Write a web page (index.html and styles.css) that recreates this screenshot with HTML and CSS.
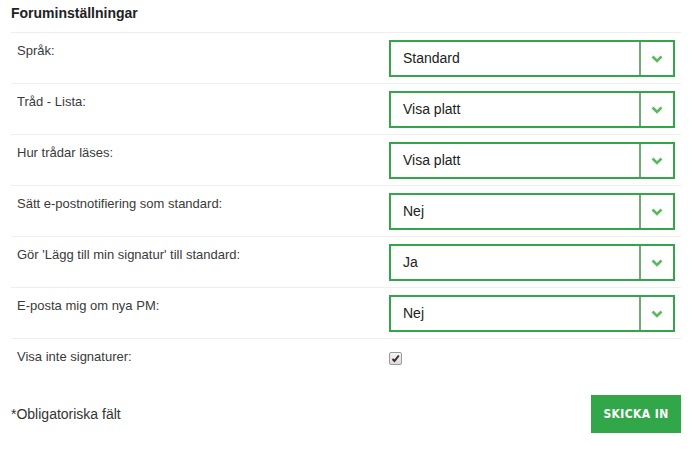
FILE: index.html
```html
<!DOCTYPE html>
<html>
<head>
<meta charset="utf-8">
<link rel="stylesheet" href="styles.css">
</head>
<body>
<div class="panel">
  <h2 class="title">Foruminställningar</h2>
  <div class="rows">
    <div class="row">
      <div class="label">Språk:</div>
      <div class="select"><span class="value">Standard</span><span class="arrow"><svg width="12" height="8" viewBox="0 0 12 8"><path d="M1.5 1.5 L6 6 L10.5 1.5" fill="none" stroke="#5cb85c" stroke-width="2.6"/></svg></span></div>
    </div>
    <div class="row">
      <div class="label">Tråd - Lista:</div>
      <div class="select"><span class="value">Visa platt</span><span class="arrow"><svg width="12" height="8" viewBox="0 0 12 8"><path d="M1.5 1.5 L6 6 L10.5 1.5" fill="none" stroke="#5cb85c" stroke-width="2.6"/></svg></span></div>
    </div>
    <div class="row">
      <div class="label">Hur trådar läses:</div>
      <div class="select"><span class="value">Visa platt</span><span class="arrow"><svg width="12" height="8" viewBox="0 0 12 8"><path d="M1.5 1.5 L6 6 L10.5 1.5" fill="none" stroke="#5cb85c" stroke-width="2.6"/></svg></span></div>
    </div>
    <div class="row">
      <div class="label">Sätt e-postnotifiering som standard:</div>
      <div class="select"><span class="value">Nej</span><span class="arrow"><svg width="12" height="8" viewBox="0 0 12 8"><path d="M1.5 1.5 L6 6 L10.5 1.5" fill="none" stroke="#5cb85c" stroke-width="2.6"/></svg></span></div>
    </div>
    <div class="row">
      <div class="label">Gör 'Lägg till min signatur' till standard:</div>
      <div class="select"><span class="value">Ja</span><span class="arrow"><svg width="12" height="8" viewBox="0 0 12 8"><path d="M1.5 1.5 L6 6 L10.5 1.5" fill="none" stroke="#5cb85c" stroke-width="2.6"/></svg></span></div>
    </div>
    <div class="row">
      <div class="label">E-posta mig om nya PM:</div>
      <div class="select"><span class="value">Nej</span><span class="arrow"><svg width="12" height="8" viewBox="0 0 12 8"><path d="M1.5 1.5 L6 6 L10.5 1.5" fill="none" stroke="#5cb85c" stroke-width="2.6"/></svg></span></div>
    </div>
    <div class="row row-last">
      <div class="label">Visa inte signaturer:</div>
      <div class="check"><span class="box"><svg width="9" height="9" viewBox="0 0 9 9"><path d="M1.5 5 L3.5 7 L7.8 1.5" fill="none" stroke="#3a2a2a" stroke-width="2"/></svg></span></div>
    </div>
  </div>
  <div class="footer">
    <span class="required">*Obligatoriska fält</span>
    <button class="submit">SKICKA IN</button>
  </div>
</div>
</body>
</html>
```
FILE: styles.css
```css
html, body {
  margin: 0;
  padding: 0;
  background: #fff;
}
body {
  font-family: "Liberation Sans", Arial, sans-serif;
  color: #333;
}
.panel {
  width: 670px;
  padding: 0 11px;
}
.title {
  margin: 0;
  padding-top: 4px;
  height: 28px;
  font-size: 14px;
  line-height: 18px;
  font-weight: bold;
  color: #222;
}
.row {
  display: flex;
  align-items: flex-start;
  border-top: 1px solid #eeeeee;
  height: 43px;
  padding-top: 7px;
}
.label {
  width: 372px;
  padding-left: 6px;
  padding-top: 2px;
  font-size: 13px;
  line-height: 18px;
  color: #3a3a3a;
}
.select {
  display: flex;
  width: 282px;
  height: 33px;
  border: 2px solid #33a64a;
  color: #222;
  font-size: 14px;
}
.value {
  flex: 1;
  padding-left: 12px;
  line-height: 33px;
}
.arrow {
  width: 32px;
  border-left: 2px solid #72a876;
  display: flex;
  align-items: center;
  justify-content: center;
}
.check {
  padding-top: 6px;
}
.box {
  display: flex;
  align-items: center;
  justify-content: center;
  width: 11px;
  height: 11px;
  border: 1px solid #9a9a9a;
  border-radius: 2px;
  background: linear-gradient(#f4f4f4, #dcdcdc);
}
.footer {
  display: flex;
  justify-content: space-between;
  align-items: center;
  margin-top: 6px;
}
.required {
  font-size: 14px;
  color: #333;
}
.submit {
  border: none;
  background: #32a74a;
  color: #fff;
  width: 90px;
  height: 38px;
  font-family: "DejaVu Sans", sans-serif;
  font-stretch: condensed;
  font-weight: bold;
  font-size: 12px;
  letter-spacing: 0.4px;
  padding: 0;
}
```
